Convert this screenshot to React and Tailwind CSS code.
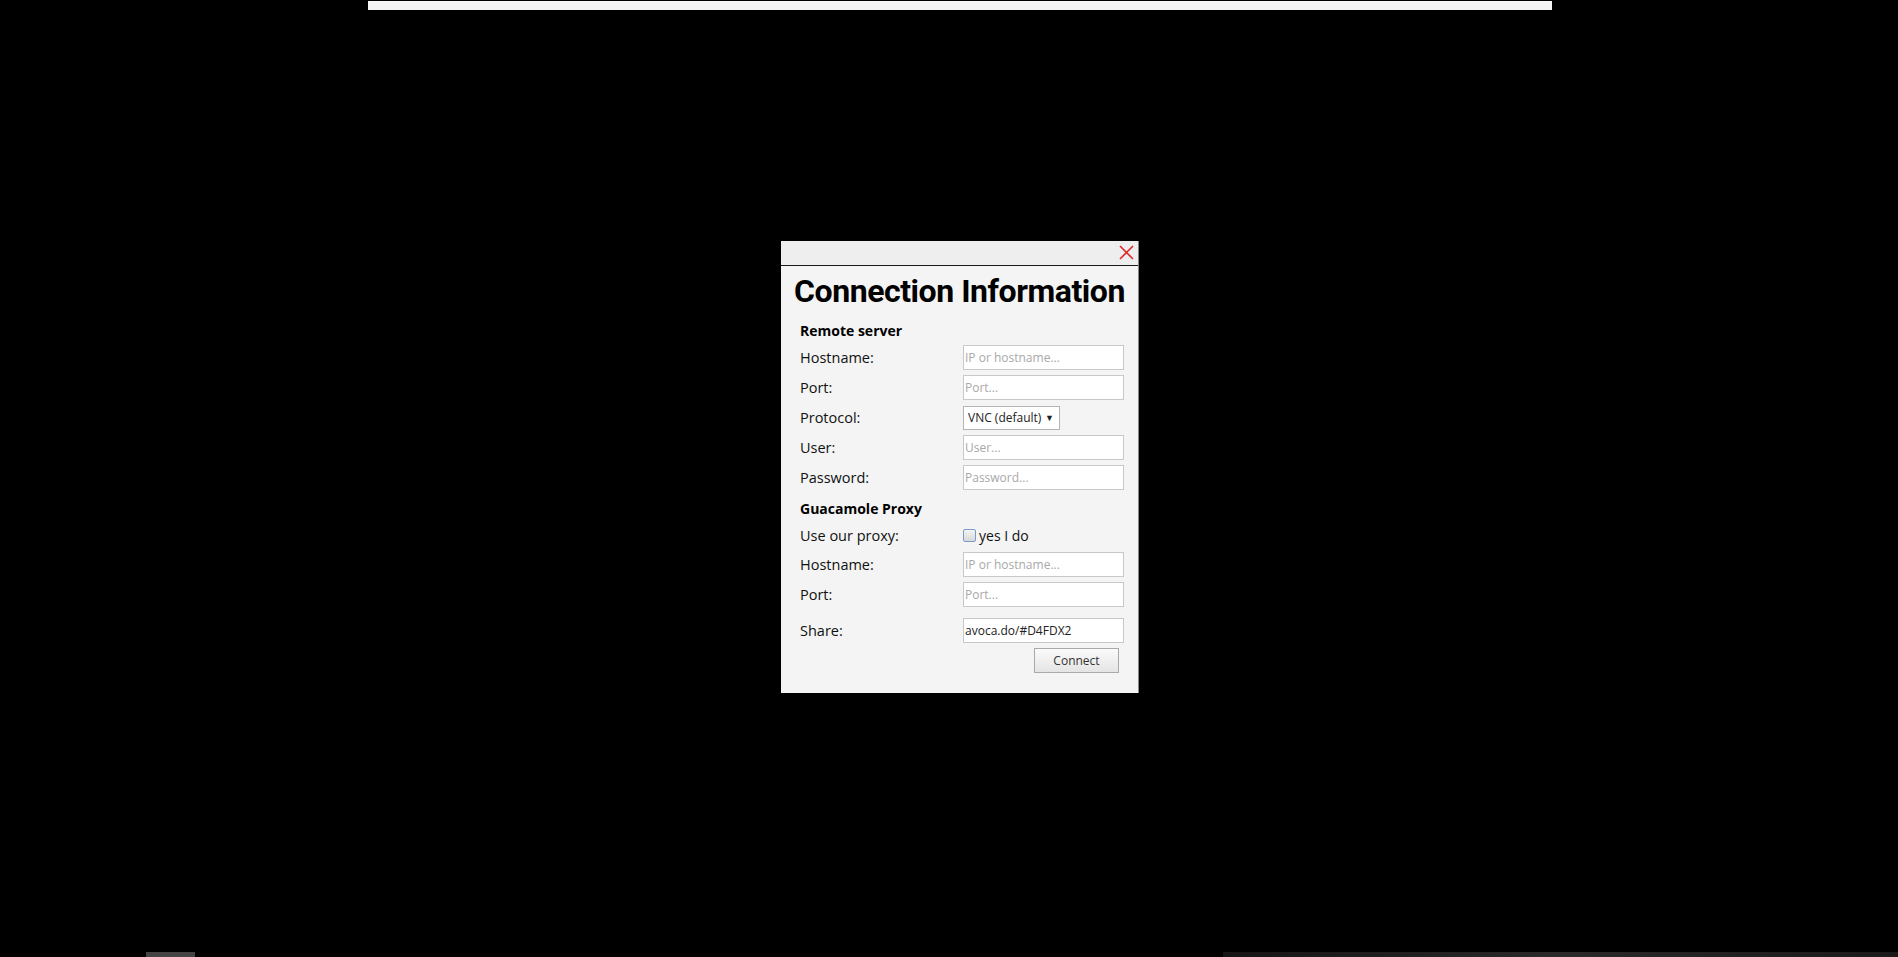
import React from "react";

function Field({ label, children, className = "" }) {
  return (
    <div className={`flex items-center h-[25px] ${className}`}>
      <div className="w-[182px] shrink-0 pl-[19px] text-[14.5px] text-[#111]">{label}</div>
      {children}
    </div>
  );
}

function TextBox({ placeholder, value }) {
  return (
    <input
      readOnly
      placeholder={placeholder}
      defaultValue={value}
      className="w-[161px] h-[25px] bg-white border border-[#c8c8c8] px-[1px] text-[12px] text-[#222] placeholder:text-[#a8a8a8] outline-none"
    />
  );
}

export default function App() {
  return (
    <div
      className="relative h-[957px] bg-black overflow-hidden"
      style={{ fontFamily: '"Open Sans", "Noto Sans", sans-serif' }}
    >
      {/* top bar */}
      <div className="ml-[368px] mt-[1px] w-[1184px] h-[9px] bg-[#f4f4f4] border-t border-[#fbfbfb]" />

      {/* dialog */}
      <div className="ml-[781px] mt-[231px] w-[358px] h-[452px] bg-[#f4f4f4] border-r border-[#888]">
        <div className="relative h-[25px] bg-[#eeeeee] border-b border-[#1a1a1a]">
          <svg
            className="absolute right-[4px] top-[4px]"
            width="15"
            height="15"
            viewBox="0 0 15 15"
          >
            <path d="M1 1 L14 14 M14 1 L1 14" stroke="#e0262b" strokeWidth="1.6" />
          </svg>
        </div>

        <div className="h-[50px] flex items-center justify-center">
          <h1
            className="whitespace-nowrap text-[32px] font-bold leading-none text-black tracking-[-0.45px]"
            style={{ fontFamily: "Roboto, sans-serif" }}
          >
            Connection Information
          </h1>
        </div>

        <div className="h-[29px] flex items-center pl-[19px] text-[14px] font-bold text-black">
          Remote server
        </div>

        <div className="flex flex-col gap-[5px]">
          <Field label="Hostname:">
            <TextBox placeholder="IP or hostname..." />
          </Field>
          <Field label="Port:">
            <TextBox placeholder="Port..." />
          </Field>
          <Field label="Protocol:">
            <div className="w-[97px] h-[24px] bg-white border border-[#b4b4b4] flex items-center justify-between pl-[4px] pr-[5px] text-[12px] text-[#222]">
              <span>VNC (default)</span>
              <span className="text-[9px]">▼</span>
            </div>
          </Field>
          <Field label="User:">
            <TextBox placeholder="User..." />
          </Field>
          <Field label="Password:">
            <TextBox placeholder="Password..." />
          </Field>
        </div>

        <div className="mt-[5px] h-[26px] flex items-center pl-[19px] text-[14px] font-bold text-black">
          Guacamole Proxy
        </div>

        <Field label="Use our proxy:" className="mt-[2px]">
          <div className="flex items-center gap-[3px] text-[14px] text-[#111]">
            <span className="w-[13px] h-[13px] rounded-[2px] border border-[#7a9ccc] bg-gradient-to-b from-[#f4f4f4] to-[#d8d8d8]" />
            <span>yes I do</span>
          </div>
        </Field>
        <Field label="Hostname:" className="mt-[4px]">
          <TextBox placeholder="IP or hostname..." />
        </Field>
        <Field label="Port:" className="mt-[5px]">
          <TextBox placeholder="Port..." />
        </Field>
        <Field label="Share:" className="mt-[11px]">
          <TextBox value="avoca.do/#D4FDX2" />
        </Field>

        <div className="mt-[5px] flex justify-end pr-[19px]">
          <button className="w-[85px] h-[25px] border border-[#a9a9a9] bg-gradient-to-b from-[#fbfbfb] to-[#e4e4e4] text-[12px] text-[#333]">
            Connect
          </button>
        </div>
      </div>

      {/* bottom strips */}
      <div className="absolute bottom-0 left-[146px] w-[49px] h-[5px] bg-[#444]" />
      <div className="absolute bottom-0 left-[1223px] right-0 h-[5px] bg-gradient-to-r from-[#151515] via-[#2a2a2a] to-[#1a1a1a]" />
    </div>
  );
}
